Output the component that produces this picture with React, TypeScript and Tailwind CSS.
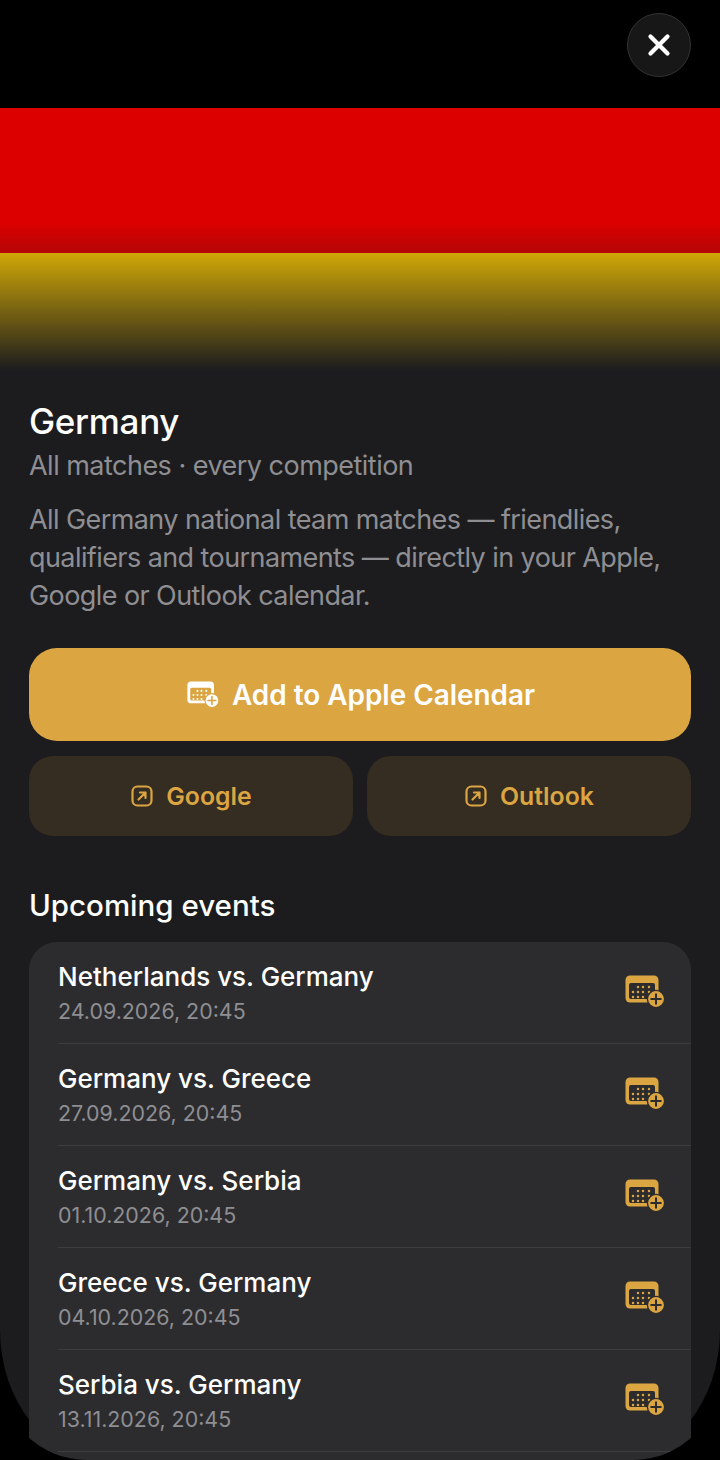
import React from "react";
import { X } from "lucide-react";

const events = [
  ["Netherlands vs. Germany", "24.09.2026, 20:45"],
  ["Germany vs. Greece", "27.09.2026, 20:45"],
  ["Germany vs. Serbia", "01.10.2026, 20:45"],
  ["Greece vs. Germany", "04.10.2026, 20:45"],
  ["Serbia vs. Germany", "13.11.2026, 20:45"],
];

function CalendarPlus({ main, bg, className }: { main: string; bg: string; className: string }) {
  const dots = [
    [13, 12], [18, 12], [24, 12],
    [8, 17], [13, 17], [18, 17], [24, 17],
    [8, 22], [13, 22], [18, 22],
  ];
  return (
    <svg viewBox="0 0 41 33" className={className} fill="none">
      <rect x="0.5" y="0.5" width="33" height="27" rx="4.5" fill={main} />
      <rect x="4" y="8" width="26" height="16" rx="2" fill={bg} />
      {dots.map(([x, y]) => (
        <circle key={`${x}-${y}`} cx={x} cy={y} r="1.25" fill={main} />
      ))}
      <circle cx="31" cy="24" r="8.6" fill={main} stroke={bg} strokeWidth="1.4" />
      <path d="M31 19.2v9.6M26.2 24h9.6" stroke={bg} strokeWidth="2" strokeLinecap="round" />
    </svg>
  );
}

function ExternalSquare() {
  return (
    <svg viewBox="0 0 22 22" className="h-[22px] w-[22px]" fill="none" stroke="#dba542" strokeWidth="2.2" strokeLinecap="round" strokeLinejoin="round">
      <rect x="1.5" y="1.5" width="19" height="19" rx="5" />
      <path d="M7.5 14.5l7-7M9 7.5h5.5V13" />
    </svg>
  );
}

export default function App() {
  return (
    <div className="h-[1460px] w-[720px] bg-black" style={{ fontFamily: "Inter, 'Noto Sans', sans-serif" }}>
      <div className="h-full rounded-bl-[105px_130px] rounded-br-[105px_130px] bg-[#1c1c1e]">
        <div className="relative h-full overflow-hidden rounded-b-[87px]">
          <div className="relative flex h-[370px] flex-col overflow-hidden">
            <div className="h-[108px] shrink-0 bg-black" />
            <div className="h-[145px] shrink-0 bg-[#dd0000]" />
            <div className="flex-1 bg-[#ffcc00]" />
            <div className="absolute inset-x-0 bottom-0 h-[40%] bg-gradient-to-b from-[#1c1c1e00] to-[#1c1c1e]" />
          </div>
          <button className="absolute right-[29px] top-[13px] flex h-[64px] w-[64px] items-center justify-center rounded-full border border-[#333335] bg-[#171717]">
            <X className="h-[34px] w-[34px] text-white" strokeWidth={3} />
          </button>

          <div className="px-[29px]">
            <h1 className="mt-[28px] text-[35px] font-medium leading-[46px] tracking-[-0.3px] text-white">Germany</h1>
            <p className="mt-[2px] text-[27px] leading-[40px] tracking-[-0.52px] text-[#8e8e93]">All matches · every competition</p>
            <p className="mt-[15px] text-[27px] leading-[38px] tracking-[-0.58px] text-[#8e8e93]">
              All Germany national team matches — friendlies,
              <br />
              qualifiers and tournaments — directly in your Apple,
              <br />
              Google or Outlook calendar.
            </p>

            <button className="mt-[33px] flex h-[93px] w-full items-center justify-center gap-[12px] rounded-[28px] bg-[#dba542] pl-[2px] text-[27.9px] font-semibold text-white">
              <CalendarPlus main="#ffffff" bg="#dba542" className="h-[27px] w-[33px]" />
              <span className="pt-[2px]">Add to Apple Calendar</span>
            </button>

            <div className="mt-[15px] grid grid-cols-2 gap-[14px]">
              {["Google", "Outlook"].map((label) => (
                <button key={label} className="flex h-[80px] items-center justify-center gap-[13px] rounded-[24px] bg-[#352c22] pl-[1px] text-[24.8px] font-semibold text-[#dba542]">
                  <ExternalSquare />
                  <span className="pt-[1px]">{label}</span>
                </button>
              ))}
            </div>

            <h2 className="mt-[47px] text-[29.5px] font-medium leading-[44px] text-white">Upcoming events</h2>

            <div className="mt-[15px] rounded-t-[28px] bg-[#2c2c2e]">
              {events.map(([title, date]) => (
                <div key={title} className="pl-[29px]">
                  <div className="flex h-[102px] items-center justify-between border-b border-[#3d3d3f] pr-[25px]">
                    <div className="pt-[1px]">
                      <div className="text-[26px] font-medium leading-[36px] text-white">{title}</div>
                      <div className="text-[21.4px] leading-[32px] text-[#8e8e93]">{date}</div>
                    </div>
                    <CalendarPlus main="#dba542" bg="#2c2c2e" className="mb-[3px] h-[33px] w-[41px]" />
                  </div>
                </div>
              ))}
              <div className="h-[60px]" />
            </div>
          </div>
        </div>
      </div>
    </div>
  );
}
